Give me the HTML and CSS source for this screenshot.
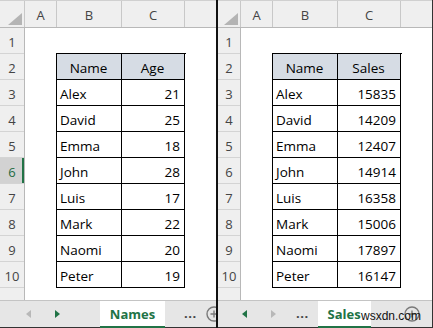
FILE: index.html
```html
<!doctype html>
<html>

<head>
	<title>Names and Sales sheets</title>
	<link rel="stylesheet" href="styles.css">
</head>

<body>
	<div class="window">
		<div class="pane pane-left">
			<div class="colheads">
				<div class="corner"><span class="tri"></span></div>
				<div class="colhead col-a">A</div>
				<div class="colhead col-b">B</div>
				<div class="colhead col-c">C</div>
				<div class="colhead col-d"></div>
			</div>
			<div class="body">
				<div class="rownums">
					<div>1</div><div>2</div><div>3</div><div>4</div><div>5</div>
					<div class="sel">6</div><div>7</div><div>8</div><div>9</div><div>10</div>
					<div class="rest"></div>
				</div>
				<div class="data">
					<div class="th">Name</div><div class="th">Age</div>
					<div>Alex</div><div class="num">21</div>
					<div>David</div><div class="num">25</div>
					<div>Emma</div><div class="num">18</div>
					<div>John</div><div class="num">28</div>
					<div>Luis</div><div class="num">17</div>
					<div>Mark</div><div class="num">22</div>
					<div>Naomi</div><div class="num">20</div>
					<div>Peter</div><div class="num">19</div>
				</div>
			</div>
			<div class="tabbar tabbar-left">
				<span class="arr arr-prev off"></span>
				<span class="arr arr-next"></span>
				<span class="tab">Names</span>
				<span class="dots">...</span>
				<span class="add">
					<svg width="16" height="16" viewBox="0 0 16 16"><circle cx="8" cy="8" r="7" fill="none" stroke="#7a7a7a" stroke-width="1.4"/><path d="M8 4.5v7M4.5 8h7" stroke="#7a7a7a" stroke-width="1.4"/></svg>
				</span>
			</div>
		</div>
		<div class="divider"></div>
		<div class="pane pane-right">
			<div class="colheads">
				<div class="corner"><span class="tri"></span></div>
				<div class="colhead col-a">A</div>
				<div class="colhead col-b">B</div>
				<div class="colhead col-c">C</div>
				<div class="colhead col-d"></div>
			</div>
			<div class="body">
				<div class="rownums">
					<div>1</div><div>2</div><div>3</div><div>4</div><div>5</div>
					<div>6</div><div>7</div><div>8</div><div>9</div><div>10</div>
					<div class="rest"></div>
				</div>
				<div class="data">
					<div class="th">Name</div><div class="th">Sales</div>
					<div>Alex</div><div class="num">15835</div>
					<div>David</div><div class="num">14209</div>
					<div>Emma</div><div class="num">12407</div>
					<div>John</div><div class="num">14914</div>
					<div>Luis</div><div class="num">16358</div>
					<div>Mark</div><div class="num">15006</div>
					<div>Naomi</div><div class="num">17897</div>
					<div>Peter</div><div class="num">16147</div>
				</div>
			</div>
			<div class="tabbar tabbar-right">
				<span class="arr arr-prev"></span>
				<span class="arr arr-next off"></span>
				<span class="dots">...</span>
				<span class="tab">Sales</span>
				<span class="add">
					<svg width="16" height="16" viewBox="0 0 16 16"><circle cx="8" cy="8" r="7" fill="none" stroke="#7a7a7a" stroke-width="1.4"/><path d="M8 4.5v7M4.5 8h7" stroke="#7a7a7a" stroke-width="1.4"/></svg>
				</span>
			</div>
		</div>
		<span class="watermark">wsxdn.com</span>
	</div>
</body>

</html>
```

FILE: styles.css
```css
html,
body {
	margin: 0;
	padding: 0;
	background: #fff;
}

body {
	font-family: "Open Sans", "Liberation Sans", sans-serif;
	font-size: 13px;
	color: #000;
}

.window {
	position: relative;
	display: flex;
	width: 433px;
	height: 328px;
	box-sizing: border-box;
	border-right: 1px solid #333;
	overflow: hidden;
}

.pane {
	display: flex;
	flex-direction: column;
	overflow: hidden;
}

.pane-left {
	width: 216px;
	flex: none;
	--rh: 25px;
}

.pane-right {
	flex: 1;
	--rh: 23px;
}

.divider {
	width: 2px;
	flex: none;
	background: #111;
}

/* column headers */
.colheads {
	display: flex;
	height: 28px;
	box-sizing: border-box;
	border-top: 1px solid #d0d0d0;
	border-bottom: 1px solid #b8b8b8;
	background: #efefef;
	color: #444;
}

.corner {
	width: var(--rh);
	flex: none;
	box-sizing: border-box;
	border-right: 1px solid #c8c8c8;
	display: flex;
	align-items: flex-end;
	justify-content: flex-end;
	padding: 0 2px 2px 0;
}

.tri {
	width: 0;
	height: 0;
	border-left: 14px solid transparent;
	border-bottom: 12px solid #b4b4b4;
}

.colhead {
	flex: none;
	box-sizing: border-box;
	border-right: 1px solid #c8c8c8;
	display: flex;
	align-items: center;
	justify-content: center;
	padding-top: 1px;
}

.col-a {
	width: 32px;
}

.col-b {
	width: 65px;
}

.col-c {
	width: 63px;
}

.col-d {
	flex: 1;
	border-right: none;
}

/* sheet body */
.body {
	flex: 1;
	display: grid;
	grid-template-columns: var(--rh) 32px 65px 63px 1fr;
	grid-template-rows: 26px repeat(9, 26px) 1fr;
}

.rownums {
	grid-column: 1;
	grid-row: 1 / -1;
	display: flex;
	flex-direction: column;
	background: #efefef;
	border-right: 1px solid #b8b8b8;
	color: #444;
}

.rownums div {
	height: 26px;
	flex: none;
	box-sizing: border-box;
	border-bottom: 1px solid #d4d4d4;
	display: flex;
	align-items: center;
	justify-content: center;
	padding-top: 3px;
}

.rownums .sel {
	background: #d2d2d2;
	color: #1e6b41;
	box-shadow: inset -2px 0 0 #217346;
}

.rownums .rest {
	flex: 1;
	border-bottom: none;
}

.data {
	grid-column: 3 / 5;
	grid-row: 2 / 11;
	display: grid;
	grid-template-columns: 65px 63px;
	grid-auto-rows: 26px;
	width: 129px;
	border-top: 1px solid #000;
	border-left: 1px solid #000;
	margin-top: -1px;
	margin-left: -1px;
	font-size: 13.5px;
}

.data div {
	box-sizing: border-box;
	border-right: 1px solid #000;
	border-bottom: 1px solid #000;
	display: flex;
	align-items: center;
	padding: 2px 4px 0 3px;
}

.data .th {
	background: #d6dce4;
	justify-content: center;
}

.data .num {
	justify-content: flex-end;
}

/* sheet tabs */
.tabbar {
	height: 28px;
	flex: none;
	box-sizing: border-box;
	display: flex;
	align-items: stretch;
	background: #e6e6e6;
	border-top: 1px solid #c4c4c4;
	border-bottom: 1px solid #333;
}

.tabbar > * {
	flex: none;
}

.arr {
	width: 0;
	height: 0;
	align-self: center;
	border-top: 4px solid transparent;
	border-bottom: 4px solid transparent;
}

.arr-prev {
	border-right: 5px solid #217346;
}

.arr-next {
	border-left: 5px solid #217346;
}

.arr-prev.off {
	border-right-color: #b8b8b8;
}

.arr-next.off {
	border-left-color: #b8b8b8;
}

.tab {
	background: #fff;
	color: #217346;
	font-weight: bold;
	display: flex;
	align-items: center;
	justify-content: center;
	box-sizing: border-box;
	padding-top: 1px;
	border-bottom: 2px solid #217346;
	margin-bottom: -1px;
}

.dots {
	display: flex;
	align-items: center;
	color: #444;
	font-weight: bold;
	letter-spacing: 0.5px;
	padding-bottom: 2px;
}

.add {
	display: flex;
	align-items: center;
}

.tabbar-left .arr-prev {
	margin-left: 26px;
}

.tabbar-left .arr-next {
	margin-left: 24px;
}

.tabbar-left .tab {
	width: 65px;
	margin-left: 40px;
}

.tabbar-left .dots {
	margin-left: 19px;
}

.tabbar-left .add {
	margin-left: 9px;
}

.tabbar-right .arr-prev {
	margin-left: 24px;
}

.tabbar-right .arr-next {
	margin-left: 24px;
}

.tabbar-right .dots {
	margin-left: 20px;
}

.tabbar-right .tab {
	width: 53px;
	margin-left: 9px;
}

.tabbar-right .add {
	margin-left: 33px;
}

.watermark {
	position: absolute;
	left: 361px;
	top: 309px;
	font-family: "Liberation Sans", sans-serif;
	font-size: 12px;
	color: #111;
}
```
